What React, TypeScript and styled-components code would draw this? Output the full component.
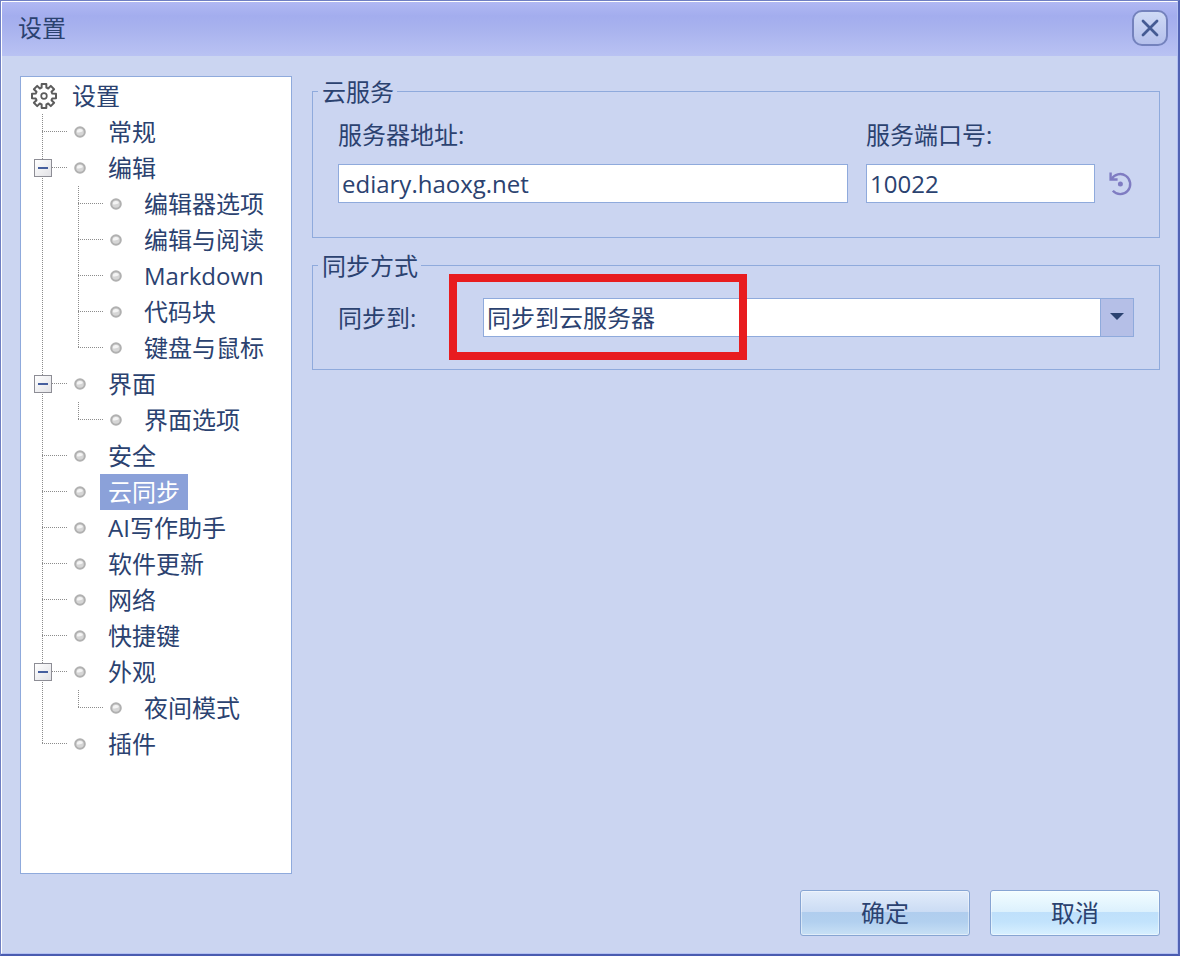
import React, { useState } from "react";
import styled, { createGlobalStyle, css } from "styled-components";

const GlobalStyle = createGlobalStyle`
  *, *::before, *::after { box-sizing: border-box; }
  body {
    margin: 0;
    background: #cbd5f1;
    color: #2b4270;
    font: 400 24px/36px "Open Sans", "Noto Sans CJK SC", sans-serif;
  }
  button, input, select { font: inherit; color: inherit; }
`;

const line = "#8faadc";

const Frame = styled.div`
  min-height: 100vh;
  display: flex;
  flex-direction: column;
  border: 1px solid #6f7fc2;
  border-right: 2px solid #5263b4;
  border-bottom: 2px solid #4a5cb0;
`;

const Dialog = styled.div`
  flex: 1;
  display: flex;
  flex-direction: column;
  border: 1px solid #fff;
  border-right-color: #b3c0f2;
  border-bottom-color: #b3c0f2;
  background: #cbd5f1;
`;

const TitleBar = styled.header`
  height: 54px;
  display: flex;
  align-items: center;
  justify-content: space-between;
  padding: 0 9px 2px 16px;
  background: linear-gradient(#b0b8f3 0, #a3adee 14px, #a8b2ee 26px, #b9c2f3 100%);
`;

const Title = styled.h1`
  margin: 0;
  font-size: 24px;
  font-weight: 400;
  line-height: 36px;
`;

const CloseButton = styled.button`
  width: 36px;
  height: 36px;
  display: grid;
  place-items: center;
  padding: 0;
  border: 2px solid #7482bd;
  border-radius: 10px;
  background: linear-gradient(#cfdaf5, #b5c0ec);
`;

const Content = styled.div`
  flex: 1;
  display: flex;
  gap: 20px;
  padding: 20px 17px 0 18px;
`;

const TreePane = styled.nav`
  flex: none;
  width: 272px;
  padding: 1px 3px;
  border: 1px solid ${line};
  background: #fff;
`;

const List = styled.ul`
  margin: 0;
  padding: 0;
  list-style: none;
`;

const Row = styled.div`
  display: flex;
  height: 36px;
`;

const dotsDown = "repeating-linear-gradient(#8c8c8c 0 1px, transparent 1px 2px)";
const dotsAcross = "repeating-linear-gradient(90deg, #8c8c8c 0 1px, transparent 1px 2px)";

type GuideKind = "none" | "pass" | "branch" | "end";

const Guide = styled.span<{ $kind: GuideKind }>`
  flex: none;
  width: 44px;
  margin-right: -8px;
  padding: 9px 10px;
  background-repeat: no-repeat;
  ${({ $kind }) =>
    $kind === "pass" &&
    css`
      background-image: ${dotsDown};
      background-size: 1px 36px;
      background-position: 18px 0;
    `}
  ${({ $kind }) =>
    ($kind === "branch" || $kind === "end") &&
    css`
      background-image: ${dotsDown}, ${dotsAcross};
      background-size: 1px ${$kind === "end" ? 18 : 36}px, 26px 1px;
      background-position: 18px 0, 18px 17px;
    `}
`;

const Toggle = styled.button`
  display: grid;
  place-items: center;
  width: 18px;
  height: 18px;
  padding: 0;
  border: 1px solid #8d8d95;
  background: linear-gradient(135deg, #fff, #e2e2e6);
`;

const IconCell = styled.span`
  flex: none;
  width: 40px;
  display: flex;
  align-items: center;
  padding-left: 6px;
`;

const Label = styled.a<{ $active?: boolean }>`
  padding: 0 8px;
  white-space: nowrap;
  text-decoration: none;
  color: ${(p) => (p.$active ? "#fff" : "#2b4270")};
  background: ${(p) => (p.$active ? "#8ba1d9" : "transparent")};
`;

const Panel = styled.main`
  flex: 1;
  min-width: 0;
  display: flex;
  flex-direction: column;
  gap: 12px;
`;

const Group = styled.fieldset<{ $bottom: number }>`
  min-width: 0;
  margin: -4px 0 0;
  padding: 0 25px ${(p) => p.$bottom}px;
  border: 1px solid ${line};
`;

const Legend = styled.legend`
  margin-left: -20px;
  padding: 2px 3px 0 4px;
`;

const Fields = styled.div`
  display: flex;
  align-items: flex-end;
  padding-top: 7px;
`;

const Field = styled.label<{ $width?: number }>`
  display: flex;
  flex-direction: column;
  gap: 11px;
  min-width: 0;
  flex: ${(p) => (p.$width ? `none` : "1")};
  width: ${(p) => (p.$width ? `${p.$width}px` : "auto")};
  & + & { margin-left: 18px; }
`;

const TextInput = styled.input`
  width: 100%;
  height: 39px;
  padding: 0 3px;
  border: 1px solid ${line};
  border-radius: 0;
  background: #fff;
  outline: none;
`;

const ResetButton = styled.button`
  flex: none;
  display: grid;
  place-items: center;
  width: 28px;
  height: 39px;
  margin-left: 11px;
  padding: 0;
  border: 0;
  background: none;
`;

const SyncRow = styled.div`
  display: flex;
  align-items: center;
  padding-top: 14px;
`;

const SyncLabel = styled.label`
  flex: none;
  width: 145px;
`;

const Combo = styled.div`
  position: relative;
  flex: 1;
  display: flex;
`;

const Select = styled.select`
  appearance: none;
  width: 100%;
  height: 39px;
  padding: 0 40px 0 3px;
  border: 1px solid ${line};
  border-radius: 0;
  background: linear-gradient(90deg, ${line} 1px, #b5bfe7 1px) right / 33px 100% no-repeat #fff;
  outline: none;
`;

const Arrow = styled.svg`
  position: absolute;
  right: 10px;
  top: 15px;
  pointer-events: none;
`;

const Highlight = styled.div`
  position: absolute;
  left: -34px;
  top: -24px;
  width: 298px;
  height: 86px;
  border: 8px solid #e81c1f;
  pointer-events: none;
`;

const Footer = styled.footer`
  display: flex;
  justify-content: flex-end;
  gap: 20px;
  padding: 16px 17px 17px;
`;

const ActionButton = styled.button<{ $primary?: boolean }>`
  width: 170px;
  height: 46px;
  padding: 0;
  border: 1px solid #87a5d3;
  border-radius: 3px;
  box-shadow: inset 0 0 0 1px rgba(255, 255, 255, 0.45);
  background: ${(p) =>
    p.$primary
      ? "linear-gradient(#e2ecfa 0, #cbdcf4 47%, #b0cdee 48%, #b2d0ef 70%, #c8e0f5 100%)"
      : "linear-gradient(#f2fdff 0, #dcf1fd 47%, #bfe0fb 48%, #c2e3fc 70%, #d8f0ff 100%)"};
`;

const GearIcon = () => {
  const pts: string[] = [];
  for (let i = 0; i < 8; i++) {
    const a = i * 45 - 90;
    [[-16, 8.6], [-11, 12.2], [11, 12.2], [16, 8.6]].forEach(([d, r]) => {
      const t = ((a + d) * Math.PI) / 180;
      pts.push(`${(14 + r * Math.cos(t)).toFixed(1)},${(14 + r * Math.sin(t)).toFixed(1)}`);
    });
  }
  return (
    <svg width="28" height="28" viewBox="0 0 28 28" fill="none" stroke="#5c5c5c" strokeWidth="2" strokeLinejoin="round" aria-hidden="true">
      <polygon points={pts.join(" ")} />
      <circle cx="14" cy="14" r="2.8" strokeWidth="1.7" />
    </svg>
  );
};

const Bullet = () => (
  <svg width="28" height="28" viewBox="0 0 28 28" aria-hidden="true">
    <circle cx="14" cy="14" r="4.8" fill="#d6d6d6" stroke="#b0b0b0" strokeWidth="2" />
    <path d="M10.800 14.200a3.200 3.200 0 0 1 6.200-1.200c-1.500 1-3.500 1.800-6.200 1.200Z" fill="#f4f4f4" />
  </svg>
);

const CloseIcon = () => (
  <svg width="20" height="20" viewBox="0 0 20 20" stroke="#455b93" strokeWidth="2.800" strokeLinecap="round" aria-hidden="true">
    <path d="M3 3l14 14M17 3L3 17" />
  </svg>
);

const ResetIcon = () => (
  <svg width="28" height="28" viewBox="0 0 28 28" fill="none" stroke="#7f7cc2" strokeWidth="2.400" aria-hidden="true">
    <path d="M5.400 9.400A10 10 0 1 1 6.800 20.800" />
    <path d="M4.600 2.500v7h7" />
    <circle cx="14.400" cy="14" r="2.500" fill="#7f7cc2" stroke="none" />
  </svg>
);

type Node = { name: string; children?: Node[] };

const tree: Node[] = [
  { name: "常规" },
  {
    name: "编辑",
    children: [
      { name: "编辑器选项" },
      { name: "编辑与阅读" },
      { name: "Markdown" },
      { name: "代码块" },
      { name: "键盘与鼠标" },
    ],
  },
  { name: "界面", children: [{ name: "界面选项" }] },
  { name: "安全" },
  { name: "云同步" },
  { name: "AI写作助手" },
  { name: "软件更新" },
  { name: "网络" },
  { name: "快捷键" },
  { name: "外观", children: [{ name: "夜间模式" }] },
  { name: "插件" },
];

type ItemProps = {
  node: Node;
  guides: GuideKind[];
  last: boolean;
  active: string;
  onSelect: (name: string) => void;
};

const TreeItem = ({ node, guides, last, active, onSelect }: ItemProps) => {
  const [open, setOpen] = useState(true);
  return (
    <li>
      <Row>
        {guides.map((kind, i) => (
          <Guide key={i} $kind={kind} />
        ))}
        <Guide $kind={last ? "end" : "branch"}>
          {node.children && (
            <Toggle aria-label={node.name} aria-expanded={open} onClick={() => setOpen(!open)}>
              <svg width="12" height="12" viewBox="0 0 12 12" stroke="#465f9e" strokeWidth="2" aria-hidden="true">
                <path d={open ? "M1 6h10" : "M1 6h10M6 1v10"} />
              </svg>
            </Toggle>
          )}
        </Guide>
        <IconCell>
          <Bullet />
        </IconCell>
        <Label
          href="#"
          $active={active === node.name}
          onClick={(e) => {
            e.preventDefault();
            onSelect(node.name);
          }}
        >
          {node.name}
        </Label>
      </Row>
      {node.children && open && (
        <List>
          {node.children.map((child, i) => (
            <TreeItem
              key={child.name}
              node={child}
              guides={[...guides, last ? "none" : "pass"]}
              last={i === node.children!.length - 1}
              active={active}
              onSelect={onSelect}
            />
          ))}
        </List>
      )}
    </li>
  );
};

export default function App() {
  const [active, setActive] = useState("云同步");
  return (
    <>
      <GlobalStyle />
      <Frame>
        <Dialog>
          <TitleBar>
            <Title>设置</Title>
            <CloseButton aria-label="关闭">
              <CloseIcon />
            </CloseButton>
          </TitleBar>
          <Content>
            <TreePane>
              <Row>
                <IconCell>
                  <GearIcon />
                </IconCell>
                <Label href="#">设置</Label>
              </Row>
              <List>
                {tree.map((node, i) => (
                  <TreeItem
                    key={node.name}
                    node={node}
                    guides={[]}
                    last={i === tree.length - 1}
                    active={active}
                    onSelect={setActive}
                  />
                ))}
              </List>
            </TreePane>
            <Panel>
              <Group $bottom={34}>
                <Legend>云服务</Legend>
                <Fields>
                  <Field>
                    服务器地址:
                    <TextInput defaultValue="ediary.haoxg.net" />
                  </Field>
                  <Field $width={229}>
                    服务端口号:
                    <TextInput defaultValue="10022" />
                  </Field>
                  <ResetButton aria-label="重置">
                    <ResetIcon />
                  </ResetButton>
                </Fields>
              </Group>
              <Group $bottom={32}>
                <Legend>同步方式</Legend>
                <SyncRow>
                  <SyncLabel htmlFor="sync-target">同步到:</SyncLabel>
                  <Combo>
                    <Select id="sync-target">
                      <option>同步到云服务器</option>
                    </Select>
                    <Arrow width="14" height="8" viewBox="0 0 14 8" aria-hidden="true">
                      <path d="M0 0h14L7 7Z" fill="#2b4270" />
                    </Arrow>
                    <Highlight />
                  </Combo>
                </SyncRow>
              </Group>
            </Panel>
          </Content>
          <Footer>
            <ActionButton $primary>确定</ActionButton>
            <ActionButton>取消</ActionButton>
          </Footer>
        </Dialog>
      </Frame>
    </>
  );
}
